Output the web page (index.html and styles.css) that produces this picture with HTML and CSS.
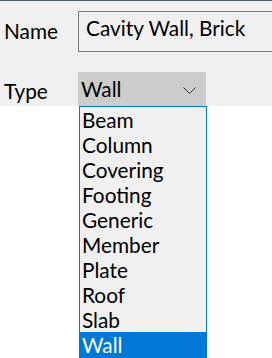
FILE: index.html
```html
<!DOCTYPE html>
<html lang="en">
<head>
  <meta charset="UTF-8" />
  <meta name="viewport" content="width=device-width, initial-scale=1.0" />
  <title>Element Properties</title>
  <link rel="stylesheet" href="styles.css">
</head>
<body>
  <div class="topbar"></div>
  <div class="panel">
    <div class="row row-name">
      <label class="field-label">Name</label>
      <div class="textbox">Cavity Wall, Brick</div>
    </div>
    <div class="row row-type">
      <label class="field-label">Type</label>
      <div class="combo">
        <span>Wall</span>
        <svg class="chevron" width="13" height="7" viewBox="0 0 13 7">
          <polyline points="0.5,0.5 6.5,6.5 12.5,0.5" fill="none" stroke="#333" stroke-width="1" />
        </svg>
      </div>
    </div>
  </div>

  <ul class="dropdown">
    <li>Beam</li>
    <li>Column</li>
    <li>Covering</li>
    <li>Footing</li>
    <li>Generic</li>
    <li>Member</li>
    <li>Plate</li>
    <li>Roof</li>
    <li>Slab</li>
    <li class="selected">Wall</li>
  </ul>
</body>
</html>
```

FILE: styles.css
```css
body {
  font-family: 'Lato', 'Open Sans', sans-serif;
  font-size: 20.8px;
  line-height: 25px;
  color: #000;
  background-color: #ffffff;
  margin: 0;
  padding: 0;
  overflow: hidden;
  position: relative;
  height: 358px;
}

.topbar {
  height: 1px;
  background-color: #525c6a;
}

.panel {
  background-color: #f0f0f0;
  height: 105px;
  padding: 10px 0 0 4px;
  box-sizing: border-box;
}

.row {
  display: flex;
  align-items: flex-start;
}

.field-label {
  width: 74px;
  flex-shrink: 0;
}

.row-name .field-label {
  padding-top: 7px;
}

.textbox {
  flex: 1;
  height: 41px;
  box-sizing: border-box;
  border: 1px solid #7a7a7a;
  border-right: none;
  padding: 3px 0 0 7px;
  white-space: nowrap;
  overflow: hidden;
}

.row-type {
  margin-top: 20px;
}

.row-type .field-label {
  padding-top: 6px;
}

.combo {
  width: 128px;
  height: 34px;
  flex-shrink: 0;
  box-sizing: border-box;
  background-color: #cccccc;
  padding: 4px 10px 0 3px;
  display: flex;
  justify-content: space-between;
  align-items: flex-start;
}

.chevron {
  margin-top: 11px;
}

.dropdown {
  position: absolute;
  top: 106px;
  left: 79px;
  width: 128px;
  box-sizing: border-box;
  margin: 0;
  padding: 0;
  list-style: none;
  background-color: #f0f0f0;
  border: 1px solid #0078d7;
}

.dropdown li {
  height: 25px;
  padding-left: 2px;
}

.dropdown li.selected {
  background-color: #0078d7;
  color: #fff;
}
```
